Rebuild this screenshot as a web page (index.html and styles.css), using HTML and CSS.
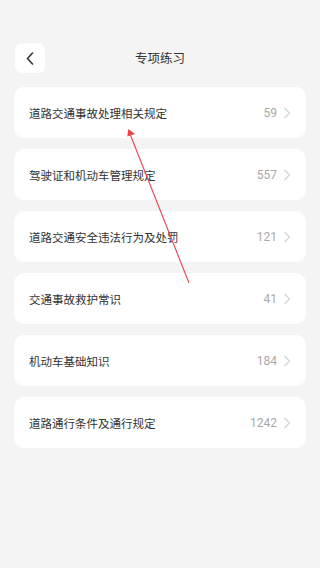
FILE: index.html
```html
<!DOCTYPE html>
<html lang="zh">
<head>
<meta charset="utf-8">
<meta name="viewport" content="width=device-width, initial-scale=1">
<title>专项练习</title>
<link rel="stylesheet" href="styles.css">
</head>
<body>
<div class="page">
  <header class="header">
    <button class="back" aria-label="返回">
      <svg width="8" height="13" viewBox="0 0 8 13"><path d="M6.5 1 L1.5 6.5 L6.5 12" fill="none" stroke="#333" stroke-width="1.6" stroke-linecap="round" stroke-linejoin="round"/></svg>
    </button>
    <h1 class="title">专项练习</h1>
  </header>
  <ul class="list">
    <li class="item"><span class="name">道路交通事故处理相关规定</span><span class="count">59</span><span class="chev"><svg width="8" height="12" viewBox="0 0 8 12"><path d="M1.5 1 L6.5 6 L1.5 11" fill="none" stroke="#d2d2d2" stroke-width="1.2"/></svg></span></li>
    <li class="item"><span class="name">驾驶证和机动车管理规定</span><span class="count">557</span><span class="chev"><svg width="8" height="12" viewBox="0 0 8 12"><path d="M1.5 1 L6.5 6 L1.5 11" fill="none" stroke="#d2d2d2" stroke-width="1.2"/></svg></span></li>
    <li class="item"><span class="name">道路交通安全违法行为及处罚</span><span class="count">121</span><span class="chev"><svg width="8" height="12" viewBox="0 0 8 12"><path d="M1.5 1 L6.5 6 L1.5 11" fill="none" stroke="#d2d2d2" stroke-width="1.2"/></svg></span></li>
    <li class="item"><span class="name">交通事故救护常识</span><span class="count">41</span><span class="chev"><svg width="8" height="12" viewBox="0 0 8 12"><path d="M1.5 1 L6.5 6 L1.5 11" fill="none" stroke="#d2d2d2" stroke-width="1.2"/></svg></span></li>
    <li class="item"><span class="name">机动车基础知识</span><span class="count">184</span><span class="chev"><svg width="8" height="12" viewBox="0 0 8 12"><path d="M1.5 1 L6.5 6 L1.5 11" fill="none" stroke="#d2d2d2" stroke-width="1.2"/></svg></span></li>
    <li class="item"><span class="name">道路通行条件及通行规定</span><span class="count">1242</span><span class="chev"><svg width="8" height="12" viewBox="0 0 8 12"><path d="M1.5 1 L6.5 6 L1.5 11" fill="none" stroke="#d2d2d2" stroke-width="1.2"/></svg></span></li>
  </ul>
  <svg class="annot" width="320" height="568" viewBox="0 0 320 568">
    <line x1="189" y1="283" x2="130" y2="134" stroke="#e8434a" stroke-width="1.1"/>
    <polygon points="128.3,129 127.3,136.5 135,134" fill="#e8434a"/>
  </svg>
</div>
</body>
</html>
```
FILE: styles.css
```css
* { box-sizing: border-box; }
html, body {
  margin: 0;
  padding: 0;
  background: #f4f4f4;
  font-family: "Noto Sans CJK SC", "Noto Sans", sans-serif;
}
.page {
  position: relative;
  width: 320px;
  min-height: 568px;
  padding-top: 43px;
}
.header {
  position: relative;
  height: 30px;
  display: flex;
  align-items: center;
  justify-content: center;
}
.back {
  position: absolute;
  left: 15px;
  top: 0;
  width: 30px;
  height: 30px;
  border: 0;
  padding: 0;
  background: #fff;
  border-radius: 7px;
  display: flex;
  align-items: center;
  justify-content: center;
}
.back svg { margin-left: -1px; }
.title {
  margin: 0;
  font-size: 12.5px;
  font-weight: 400;
  color: #333;
  line-height: 30px;
}
.list {
  list-style: none;
  margin: 14px 14px 0;
  padding: 0;
  display: flex;
  flex-direction: column;
  gap: 11px;
}
.item {
  height: 51px;
  background: #fff;
  border-radius: 10px;
  display: flex;
  align-items: center;
  padding: 0 15px 0 15px;
}
.name {
  flex: 1;
  font-size: 11.5px;
  color: #333;
}
.count {
  font-family: Roboto, "Noto Sans", sans-serif;
  font-size: 12px;
  color: #a8a8a8;
  margin-right: 6px;
}
.chev {
  display: flex;
  align-items: center;
}
.annot {
  position: absolute;
  left: 0;
  top: 0;
  pointer-events: none;
}
```
